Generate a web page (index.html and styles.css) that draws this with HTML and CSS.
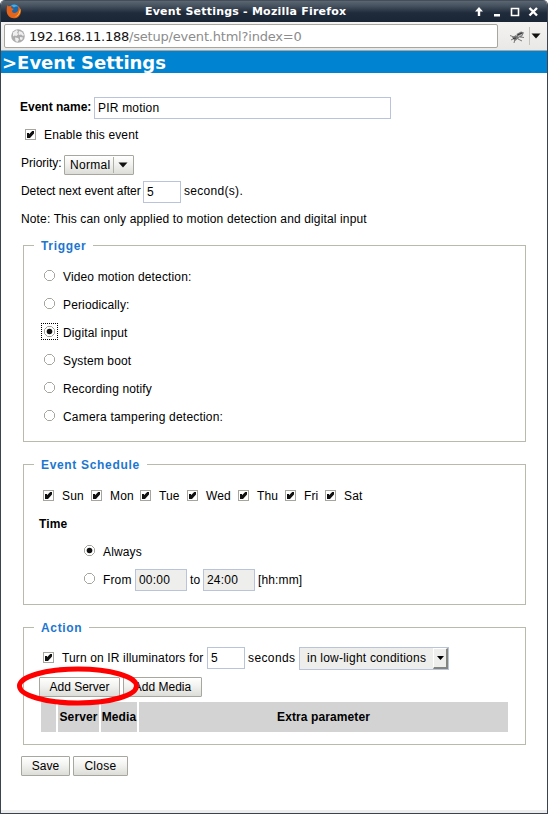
FILE: index.html
```
<!DOCTYPE html>
<html lang="en">
<head>
    <meta charset="UTF-8">
    <title>Event Settings</title>
    <link rel="stylesheet" href="styles.css">
</head>
<body>
<svg class="defs">
    <symbol id="radio" viewBox="0 0 11 11">
        <path d="M3.5 .5h4l3 3v4l-3 3h-4l-3-3v-4z" fill="#fff" stroke="#a5a59d"/>
    </symbol>
    <symbol id="radio_on" viewBox="0 0 11 11">
        <path d="M3.5 .5h4l3 3v4l-3 3h-4l-3-3v-4z" fill="#fff" stroke="#a5a59d"/>
        <circle cx="5.5" cy="5.5" r="2.8" fill="#111"/>
    </symbol>
    <symbol id="check" viewBox="0 0 11 11">
        <rect x=".5" y=".5" width="10" height="10" fill="#fff" stroke="#a5a59d"/>
        <path d="M2 4h2v1.300L7.200 2H9v2.500L5 9H2z" fill="#111"/>
    </symbol>
</svg>
<div class="window">
    <div class="titlebar">
        <svg class="firefox" width="16" height="16" viewBox="0 0 16 16">
            <circle cx="8" cy="7.6" r="6.6" fill="#1d66a8"/>
            <path d="M5 2.5c3-2 6.500-.8 7.600 1.500-2-.8-3.600-.4-4.600.6z" fill="#4fa8d8"/>
            <path d="M1.400 2.200 3 3.500c1-.6 2-.6 2.600-.2L5.200 5l2.600 1-1.600 1.400c-.5 1.600.6 2.600 2.200 2.500 2 0 3.400-1.200 3.900-2.900.3-1.400 0-2.800-.6-4 2.200 1.500 3.500 3.800 3.100 6.400-.5 3.400-3.500 5.900-7 5.900C3.800 15.300.8 12 .7 8.300.7 6 .8 4 1.400 2.200z" fill="#e4641c"/>
            <path d="M14.300 5.500c.8 4.500-2 8.300-6 8.500 2.500-.9 4.600-2.900 5-5.500z" fill="#fbc02c"/>
        </svg>
        <span class="caption">Event Settings - Mozilla Firefox</span>
        <svg class="controls" width="66" height="12" viewBox="0 0 66 12">
            <path d="M5 1 9 5.500H6.200V10H3.800V5.500H1z" fill="#fff"/>
            <path d="M20 8h6v2.500h-6z" fill="#fff"/>
            <path d="M37.500 2.500h7v7h-7z" fill="none" stroke="#fff" stroke-width="1.600"/>
            <path d="M55.500 2l7.500 7.500m0-7.500l-7.500 7.500" stroke="#fff" stroke-width="2.400"/>
        </svg>
    </div>
    <div class="toolbar">
        <div class="address">
            <svg width="14" height="14" viewBox="0 0 14 14">
                <circle cx="7" cy="7" r="6.800" fill="#adadad"/>
                <path d="M2 3.500 5.500 1l1.500 1-1 2 1.500 1-2 2-2-.5-1.500 1zM8 2l3 1 2 3-1 1-2-1.500-2 .5-.5-2zM4 8.500l3 .5 1 1.500-1.500 2.500-2-1zM9 8l3 .5-1 2.500-2-.5z" fill="#efefef"/>
            </svg>
            <span class="host">192.168.11.188</span><span class="path">/setup/event.html?index=0</span>
        </div>
        <svg class="bug" width="17" height="14" viewBox="0 0 17 14">
            <path d="M3 7.500 7 5l3 3-4 3zM7.500 4l4.500-2.500 3 1-2 4-4 1.500z" fill="#777"/>
            <path d="M1 5.500 5 7m-3 3 4-2m-1 5 1-4m3 0 4 2m-2-4 4 .500" stroke="#777" fill="none"/>
            <path d="M4 8.500 7 8m1.500-3L13 3" stroke="#333" fill="none"/>
            <path d="M9 6.500 13 4.500" stroke="#ccc" fill="none"/>
        </svg>
        <svg class="drop" width="12" height="18" viewBox="0 0 12 18">
            <path d="M.5 0v18" stroke="#c4c2bd"/>
            <path d="M2.500 6.500h9L7 11.500z" fill="#111"/>
        </svg>
    </div>
    <h1>&gt;Event Settings</h1>

    <form class="page">
        <div class="row">
            <b class="event_name">Event name:</b>
            <input type="text" class="name" value="PIR motion">
        </div>
        <div class="row enable">
            <svg class="mark"><use href="#check"/></svg>
            <label>Enable this event</label>
        </div>
        <div class="row">
            <label class="priority">Priority:</label>
            <div class="select normal">
                <span>Normal</span>
                <svg width="20" height="16" viewBox="0 0 20 16">
                    <path d="M.5 0v16" stroke="#b0afa8"/>
                    <path d="M5.500 5.500h9L10 10.500z" fill="#111"/>
                </svg>
            </div>
        </div>
        <div class="row">
            <label class="detect">Detect next event after</label>
            <input type="text" class="num" value="5">
            <label class="unit">second(s).</label>
        </div>
        <div class="row"><span class="note">Note: This can only applied to motion detection and digital input</span></div>

        <fieldset class="trigger">
            <legend>Trigger</legend>
            <div class="row"><svg class="mark"><use href="#radio"/></svg><label>Video motion detection:</label></div>
            <div class="row"><svg class="mark"><use href="#radio"/></svg><label>Periodically:</label></div>
            <div class="row"><svg class="mark focus"><use href="#radio_on"/></svg><label>Digital input</label></div>
            <div class="row"><svg class="mark"><use href="#radio"/></svg><label>System boot</label></div>
            <div class="row"><svg class="mark"><use href="#radio"/></svg><label>Recording notify</label></div>
            <div class="row"><svg class="mark"><use href="#radio"/></svg><label class="camera">Camera tampering detection:</label></div>
        </fieldset>

        <fieldset class="schedule">
            <legend>Event Schedule</legend>
            <div class="row days">
                <svg class="mark"><use href="#check"/></svg><label class="sun">Sun</label>
                <svg class="mark"><use href="#check"/></svg><label class="mon">Mon</label>
                <svg class="mark"><use href="#check"/></svg><label class="tue">Tue</label>
                <svg class="mark"><use href="#check"/></svg><label class="wed">Wed</label>
                <svg class="mark"><use href="#check"/></svg><label class="thu">Thu</label>
                <svg class="mark"><use href="#check"/></svg><label class="fri">Fri</label>
                <svg class="mark"><use href="#check"/></svg><label class="sat">Sat</label>
            </div>
            <div class="row"><b class="time">Time</b></div>
            <div class="row range"><svg class="mark"><use href="#radio_on"/></svg><label>Always</label></div>
            <div class="row range">
                <svg class="mark"><use href="#radio"/></svg>
                <label class="from">From</label>
                <input type="text" class="hour" value="00:00" disabled>
                <label class="to">to</label>
                <input type="text" class="hour" value="24:00" disabled>
                <label class="hint">[hh:mm]</label>
            </div>
        </fieldset>

        <fieldset class="action">
            <legend>Action</legend>
            <div class="row">
                <svg class="mark"><use href="#check"/></svg>
                <label class="turn">Turn on IR illuminators for</label>
                <input type="text" class="num" value="5">
                <label class="seconds">seconds</label>
                <div class="light">
                    <span>in low-light conditions</span>
                    <i><svg width="7" height="4" viewBox="0 0 7 4"><path d="M0 0h7L3.500 4z" fill="#000"/></svg></i>
                </div>
            </div>
            <div class="buttons">
                <button type="button" class="add_server">Add Server</button>
                <button type="button" class="add_media">Add Media</button>
                <svg class="ring" width="124" height="42" viewBox="0 0 124 42">
                    <ellipse cx="62" cy="21" rx="58.500" ry="17" fill="none" stroke="#f00" stroke-width="5"/>
                </svg>
            </div>
            <table>
                <tr>
                    <th class="c1"></th>
                    <th class="c2">Server</th>
                    <th class="c3">Media</th>
                    <th class="c4">Extra parameter</th>
                </tr>
            </table>
        </fieldset>

        <div class="footer">
            <button type="button" class="save">Save</button>
            <button type="button" class="close">Close</button>
        </div>
    </form>
</div>
</body>
</html>
```

FILE: styles.css
```
*{
    box-sizing: border-box;
}
body{
    margin: 0;
    background: #fff;
}
.defs{
    display: none;
}
svg{
    display: block;
    flex: none;
}
.window{
    width: 548px;
    height: 814px;
    border: 1px solid #3a4350;
    border-top: 0;
    border-radius: 5px 5px 0 0;
    overflow: hidden;
    display: flex;
    flex-direction: column;
}
.titlebar{
    height: 22px;
    flex: none;
    display: flex;
    align-items: center;
    background: linear-gradient(#2c3644 0, #5b6672 1px, #46515f 6px, #1f2a3a 13px, #1a2535 22px);
}
.firefox{
    margin: 0 0 1px 5px;
}
.caption{
    width: 203px;
    margin: 2px 126px 0 123px;
    font: bold 11px/22px "DejaVu Sans", sans-serif;
    letter-spacing: .22px;
    white-space: nowrap;
    color: #fff;
}
.controls{
    margin-top: 2px;
}
.toolbar{
    height: 29px;
    flex: none;
    display: flex;
    align-items: flex-start;
    padding: 2px 0 0 3px;
    background: linear-gradient(#f4f3f2, #e9e8e6);
    border-bottom: 1px solid #a9a6a0;
}
.address{
    width: 494px;
    height: 24px;
    display: flex;
    align-items: center;
    padding-left: 6px;
    background: #fff;
    border: 1px solid #a9a6a0;
    border-radius: 2px;
    font: 13px/22px "DejaVu Sans", sans-serif;
    white-space: nowrap;
}
.host{
    margin: 1px 0 0 4px;
    letter-spacing: -.24px;
    color: #111;
}
.path{
    margin-top: 1px;
    letter-spacing: -.2px;
    color: #8c8c8c;
}
.bug{
    margin: 6px 3px 0 11px;
}
.drop{
    margin-top: 3px;
}
h1{
    flex: none;
    height: 22px;
    margin: 0;
    padding-left: 1px;
    background: #0084d1;
    color: #fff;
    font: bold 18px/23px "DejaVu Sans", sans-serif;
    white-space: nowrap;
}
.page{
    flex: 1;
    padding: 21px 21px 0 20px;
    border-bottom: 3px solid #ededed;
    font: 12px/28px "Liberation Sans", sans-serif;
    letter-spacing: .14px;
    color: #000;
    white-space: nowrap;
}
.row{
    height: 28px;
    display: flex;
    align-items: center;
}
.page > .row label, .row b, .note{
    margin-top: -2px;
}
.mark{
    width: 11px;
    height: 11px;
    margin: 0 8px 3px 0;
}
.focus{
    outline: 1px dotted #000;
    outline-offset: 2px;
}
input{
    height: 22px;
    padding: 0 3px;
    border: 1px solid #b9c4da;
    background: #fff;
    color: #000;
    font: 12px "Liberation Sans", sans-serif;
    letter-spacing: .2px;
}
input:disabled{
    background: #eeeeec;
}
.event_name{
    width: 74px;
    margin-left: -1px;
    letter-spacing: 0;
}
.name{
    width: 297px;
}
.enable{
    padding-left: 4px;
}
.priority{
    width: 43px;
    letter-spacing: 0;
}
.select{
    height: 20px;
    display: flex;
    align-items: center;
    margin-top: 1px;
}
.normal{
    width: 70px;
    padding-left: 5px;
    letter-spacing: .3px;
}
.normal span{
    width: 44px;
}
.select, button{
    border: 1px solid #a7a69f;
    border-radius: 1px;
    background: linear-gradient(#fff, #f2f2f0 45%, #dcdcd8);
}
.detect{
    width: 122px;
    letter-spacing: -.05px;
}
.num{
    width: 38px;
    margin-right: 3px;
}
.unit{
    letter-spacing: .3px;
}
fieldset{
    width: 503px;
    margin: 0 0 0 2px;
    padding: 10px 0 0 20px;
    border: 1px solid #b9b9ac;
}
legend{
    height: 15px;
    margin-left: -10px;
    padding: 0 7px;
    font-weight: bold;
    line-height: 17px;
    letter-spacing: .67px;
    color: #1d76cf;
}
.trigger{
    height: 204px;
    margin-top: 4px;
}
.camera{
    letter-spacing: .2px;
}
.schedule{
    height: 148px;
    margin-top: 15px;
}
.action{
    position: relative;
    height: 125px;
    margin-top: 15px;
    padding-top: 9px;
}
.days .mark, .action .mark{
    margin-left: -1px;
    margin-bottom: 1px;
}
.sun{ width: 30px; }
.mon{ width: 31px; }
.tue{ width: 29px; }
.wed{ width: 33px; }
.thu{ width: 29px; }
.fri{ width: 22px; }
.row .time{
    margin: 0 0 0 -5px;
}
.range{
    padding-left: 40px;
}
.from{
    width: 32px;
}
.hour{
    width: 52px;
}
.to{
    padding: 0 3px;
    width: 16px;
}
.hint{
    padding-left: 3px;
}
.turn{
    width: 145px;
}
.seconds{
    width: 51px;
    letter-spacing: .4px;
}
.light{
    width: 150px;
    height: 23px;
    display: flex;
    align-items: center;
    padding-left: 7px;
    border: 1px solid #b9c4da;
    background: #eeeeec;
    line-height: 23px;
    letter-spacing: .22px;
}
.light span{
    width: 126px;
}
.light i{
    width: 15px;
    height: 21px;
    display: flex;
    align-items: center;
    justify-content: center;
    border: 1px solid #fff;
    border-right: 2px solid #85857f;
    border-bottom: 2px solid #85857f;
}
button{
    height: 20px;
    padding: 0;
    color: #000;
    font: 12px/18px "Liberation Sans", sans-serif;
    letter-spacing: 0;
}
.buttons{
    position: relative;
    display: flex;
    gap: 3px;
    margin: 5px 0 0 -5px;
}
.add_server{
    width: 81px;
}
.add_media{
    width: 79px;
}
.ring{
    position: absolute;
    left: -23px;
    top: -12px;
}
table{
    width: 471px;
    margin: 3px 0 0 -5px;
    table-layout: fixed;
    border-spacing: 2px;
}
th{
    height: 30px;
    padding: 0;
    background: #d3d3d3;
    line-height: 28px;
    letter-spacing: .1px;
}
.c1{ width: 15px; }
.c2{ width: 41px; }
.c3{ width: 36px; }
.footer{
    display: flex;
    gap: 3px;
    margin-top: 11px;
}
.save{
    width: 49px;
}
.close{
    width: 55px;
    letter-spacing: .3px;
}
```
